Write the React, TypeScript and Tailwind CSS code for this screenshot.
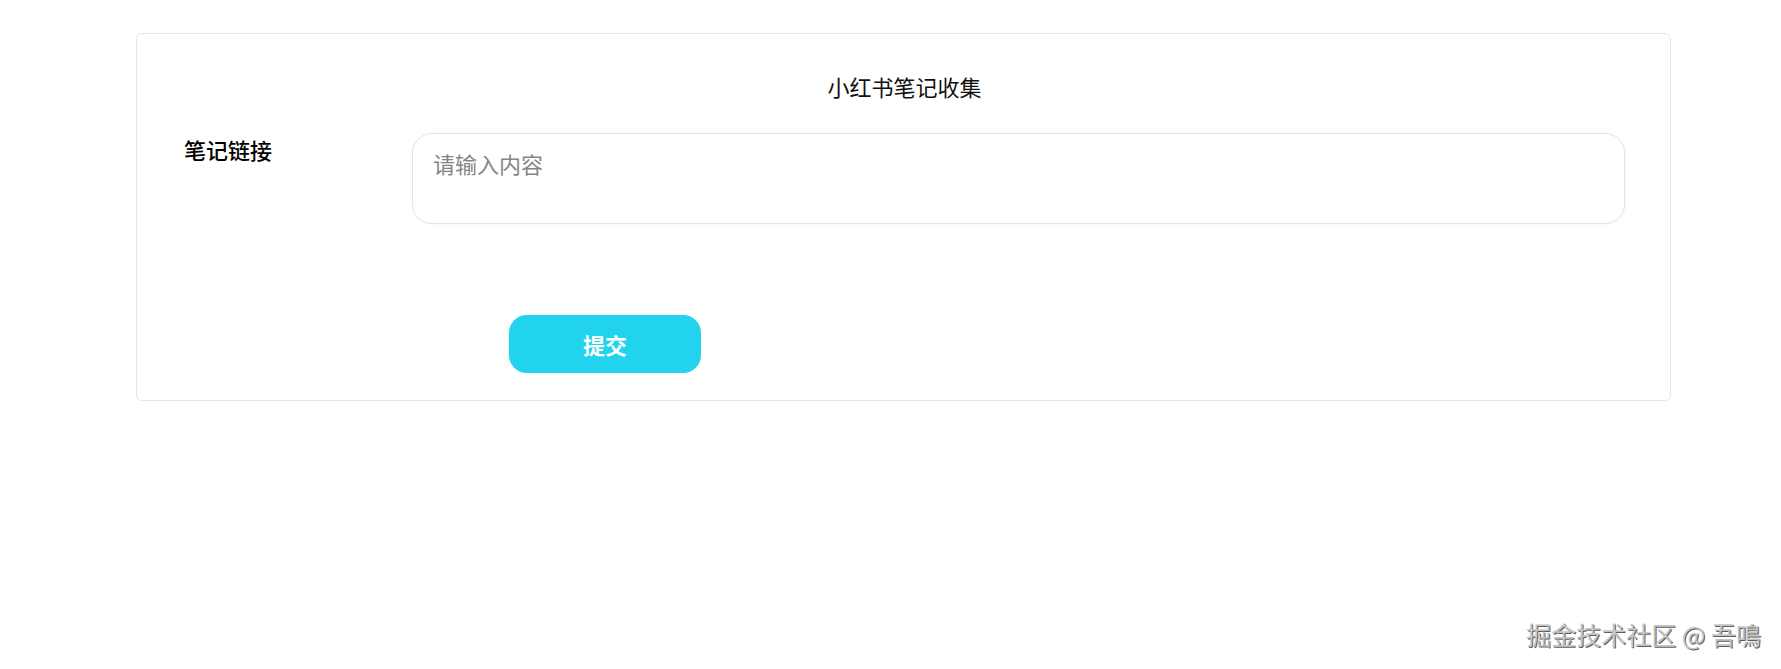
import React, { useState } from 'react';

const cjk = "font-['Noto_Sans_CJK_SC','Noto_Sans',sans-serif]";

const NoteCollector: React.FC = () => {
  const [link, setLink] = useState('');

  const handleSubmit = () => {
    if (!link.trim()) return;
    setLink('');
  };

  return (
    <div className={`relative w-full h-[669px] bg-white overflow-hidden ${cjk}`}>
      <div className="ml-[136px] mt-[33px] w-[1535px] border border-[#e6e6e6] rounded-[6px] bg-white pt-[36px] pb-[27px] pl-[47px] pr-[45px]">
        <h1 className="text-center text-[22px] leading-[32px] font-normal text-[#111]">小红书笔记收集</h1>

        <div className="mt-[31px] flex items-start">
          <label className="w-[228px] shrink-0 text-[22px] leading-[32px] font-medium text-black">笔记链接</label>
          <textarea
            value={link}
            onChange={e => setLink(e.target.value)}
            placeholder="请输入内容"
            className="flex-1 h-[91px] resize-none rounded-[20px] border border-[#e3e3e3] bg-white px-[20px] pt-[13px] text-[22px] leading-[32px] text-[#222] placeholder:text-[#858585] outline-none shadow-[1px_1px_3px_rgba(0,0,0,0.03)]"
          />
        </div>

        <div className="mt-[91px] pl-[325px]">
          <button
            onClick={handleSubmit}
            className="w-[192px] h-[58px] rounded-[18px] bg-[#22d3ee] text-white text-[22px] font-semibold hover:bg-[#1cc4de] transition-colors"
          >
            提交
          </button>
        </div>
      </div>

      <div className="absolute right-[20px] bottom-[20px] text-[25px] leading-[30px] font-normal text-[#c4c4c4] [text-shadow:1px_1px_0_#5f5f5f] select-none">
        掘金技术社区 @ 吾鳴
      </div>
    </div>
  );
};

export default function App() {
  return <NoteCollector />;
}
